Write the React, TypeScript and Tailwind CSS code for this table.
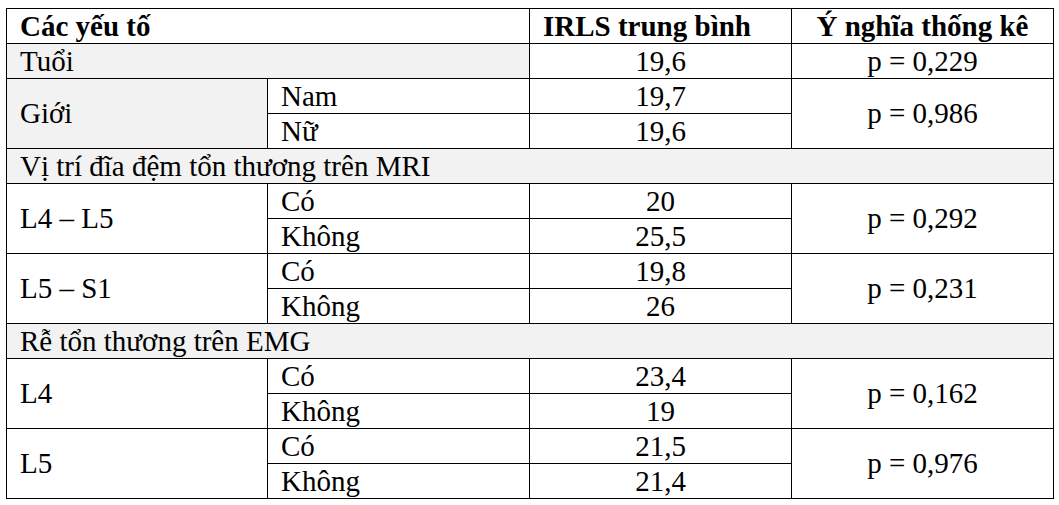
import React from 'react';

type Group = {
  label: string;
  rows: { sub: string; value: string }[];
  p: string;
};

const cell = 'border border-black h-[35px] px-[13px] py-0 leading-none align-middle';

function GroupRows({ group }: { group: Group }) {
  return (
    <>
      {group.rows.map((r, i) => (
        <tr key={r.sub}>
          {i === 0 && (
            <td rowSpan={group.rows.length} className={`${cell} ${group.label === 'Giới' ? 'bg-[#f2f2f2]' : ''}`}>
              {group.label}
            </td>
          )}
          <td className={cell}>{r.sub}</td>
          <td className={`${cell} text-center`}>{r.value}</td>
          {i === 0 && (
            <td rowSpan={group.rows.length} className={`${cell} text-center`}>
              {group.p}
            </td>
          )}
        </tr>
      ))}
    </>
  );
}

function SectionRow({ title }: { title: string }) {
  return (
    <tr className="bg-[#f2f2f2]">
      <td colSpan={4} className={cell}>
        {title}
      </td>
    </tr>
  );
}

export default function App() {
  const gender: Group = {
    label: 'Giới',
    rows: [
      { sub: 'Nam', value: '19,7' },
      { sub: 'Nữ', value: '19,6' },
    ],
    p: 'p = 0,986',
  };

  const disc: Group[] = [
    { label: 'L4 – L5', rows: [{ sub: 'Có', value: '20' }, { sub: 'Không', value: '25,5' }], p: 'p = 0,292' },
    { label: 'L5 – S1', rows: [{ sub: 'Có', value: '19,8' }, { sub: 'Không', value: '26' }], p: 'p = 0,231' },
  ];

  const roots: Group[] = [
    { label: 'L4', rows: [{ sub: 'Có', value: '23,4' }, { sub: 'Không', value: '19' }], p: 'p = 0,162' },
    { label: 'L5', rows: [{ sub: 'Có', value: '21,5' }, { sub: 'Không', value: '21,4' }], p: 'p = 0,976' },
  ];

  return (
    <div className="w-[1059px] h-[505px] bg-white pt-[8px] pl-[6px] font-['Liberation_Serif',serif] text-[29px] text-black">
      <table className="w-[1047px] table-fixed border-collapse">
        <colgroup>
          <col className="w-[261px]" />
          <col className="w-[262px]" />
          <col className="w-[262px]" />
          <col className="w-[262px]" />
        </colgroup>
        <tbody>
          <tr className="font-bold">
            <td colSpan={2} className={cell}>Các yếu tố</td>
            <td className={cell}>IRLS trung bình</td>
            <td className={`${cell} text-center`}>Ý nghĩa thống kê</td>
          </tr>
          <tr>
            <td colSpan={2} className={`${cell} bg-[#f2f2f2]`}>Tuổi</td>
            <td className={`${cell} text-center`}>19,6</td>
            <td className={`${cell} text-center`}>p = 0,229</td>
          </tr>
          <GroupRows group={gender} />
          <SectionRow title="Vị trí đĩa đệm tổn thương trên MRI" />
          {disc.map((g) => (
            <GroupRows key={g.label} group={g} />
          ))}
          <SectionRow title="Rễ tổn thương trên EMG" />
          {roots.map((g) => (
            <GroupRows key={g.label} group={g} />
          ))}
        </tbody>
      </table>
    </div>
  );
}
